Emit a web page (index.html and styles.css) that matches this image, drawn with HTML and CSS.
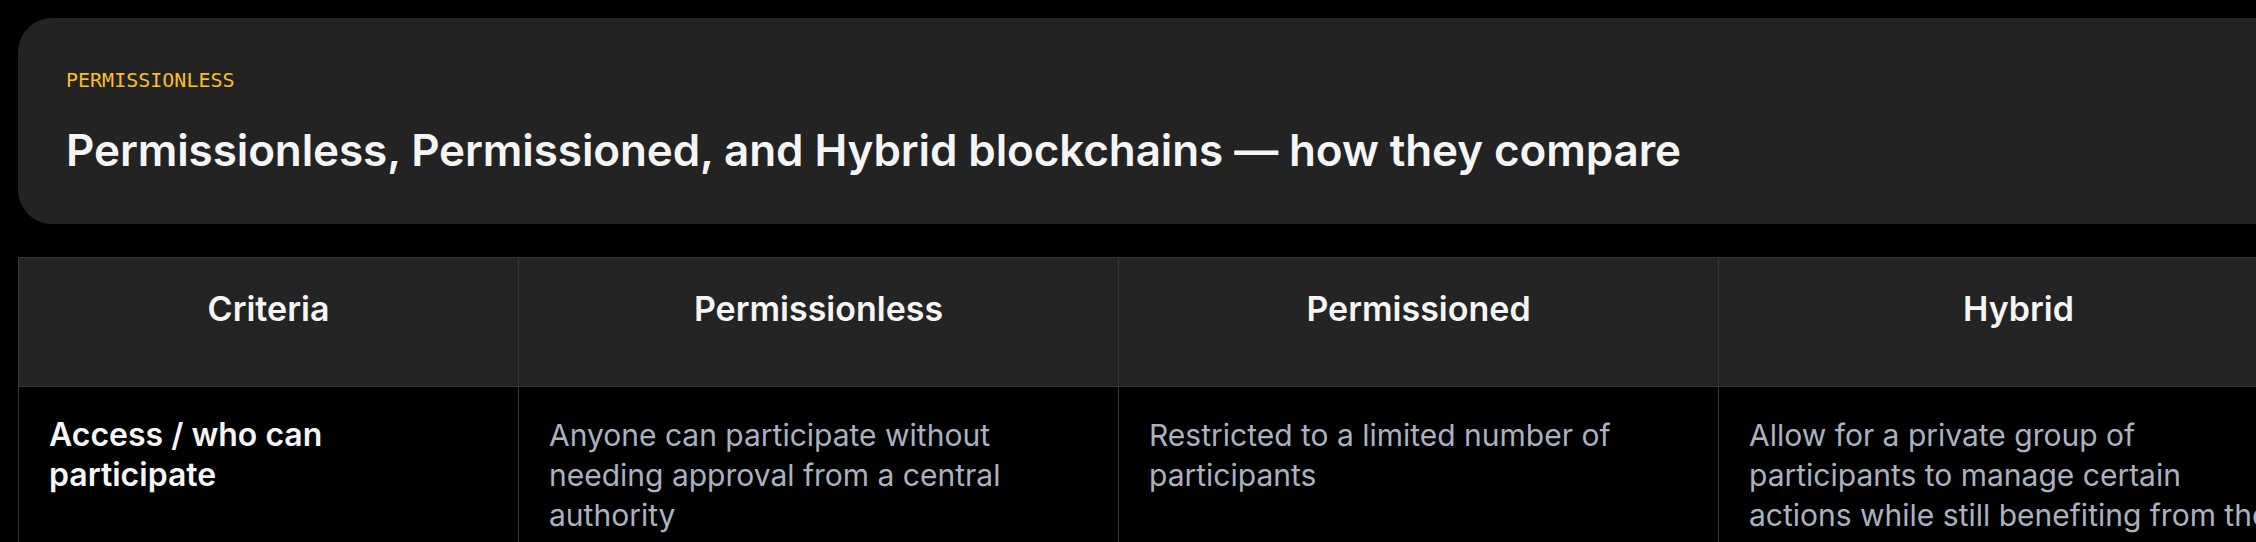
FILE: index.html
```html
<!DOCTYPE html>
<html lang="en">
<head>
<meta charset="utf-8">
<title>Blockchain comparison</title>
<link rel="stylesheet" href="styles.css">
</head>
<body>
<main class="page">
  <section class="hero">
    <p class="eyebrow">PERMISSIONLESS</p>
    <h1 class="title">Permissionless, Permissioned, and Hybrid blockchains — how they compare</h1>
  </section>
  <div class="compare">
    <div class="cell head">Criteria</div>
    <div class="cell head">Permissionless</div>
    <div class="cell head">Permissioned</div>
    <div class="cell head">Hybrid</div>
    <div class="cell crit">Access / who can participate</div>
    <div class="cell body">Anyone can participate without needing approval from a central authority</div>
    <div class="cell body">Restricted to a limited number of participants</div>
    <div class="cell body">Allow for a private group of participants to manage certain actions while still benefiting from the transparency and security of a public blockchain</div>
  </div>
</main>
</body>
</html>
```

FILE: styles.css
```css
html, body {
  margin: 0;
  padding: 0;
  background: #000;
  overflow: hidden;
}
body {
  font-family: Inter, "Noto Sans", sans-serif;
  color: #f5f5f5;
}
.page {
  width: 2301px;
  padding: 18px;
  display: flex;
  flex-direction: column;
  gap: 33px;
}
.hero {
  background: #232323;
  border-radius: 34px;
  padding: 50px 48px 47px;
  display: flex;
  flex-direction: column;
  gap: 31px;
}
.eyebrow {
  margin: 0;
  font-family: "DejaVu Sans Mono", "Liberation Mono", monospace;
  font-size: 20px;
  line-height: 24px;
  color: #fbbf24;
}
.title {
  margin: 0;
  font-size: 44px;
  line-height: 54px;
  font-weight: 600;
  color: #f5f5f5;
  letter-spacing: -0.1px;
}
.compare {
  display: grid;
  grid-template-columns: 500px 600px 600px 600px;
  border-top: 1px solid #2f373f;
  border-left: 1px solid #2f373f;
}
.cell {
  border-right: 1px solid #2f373f;
  border-bottom: 1px solid #2f373f;
}
.head {
  background: #242424;
  height: 129px;
  box-sizing: border-box;
  padding: 29px 30px 0;
  text-align: center;
  font-size: 34px;
  line-height: 44px;
  font-weight: 600;
  color: #f5f5f5;
}
.crit, .body {
  padding: 28px 30px 30px;
  line-height: 40px;
}
.crit {
  font-size: 32px;
  font-weight: 600;
  color: #f5f5f5;
  padding-right: 110px;
}
.body {
  font-size: 30px;
  font-weight: 400;
  color: #aab2c2;
}
```
